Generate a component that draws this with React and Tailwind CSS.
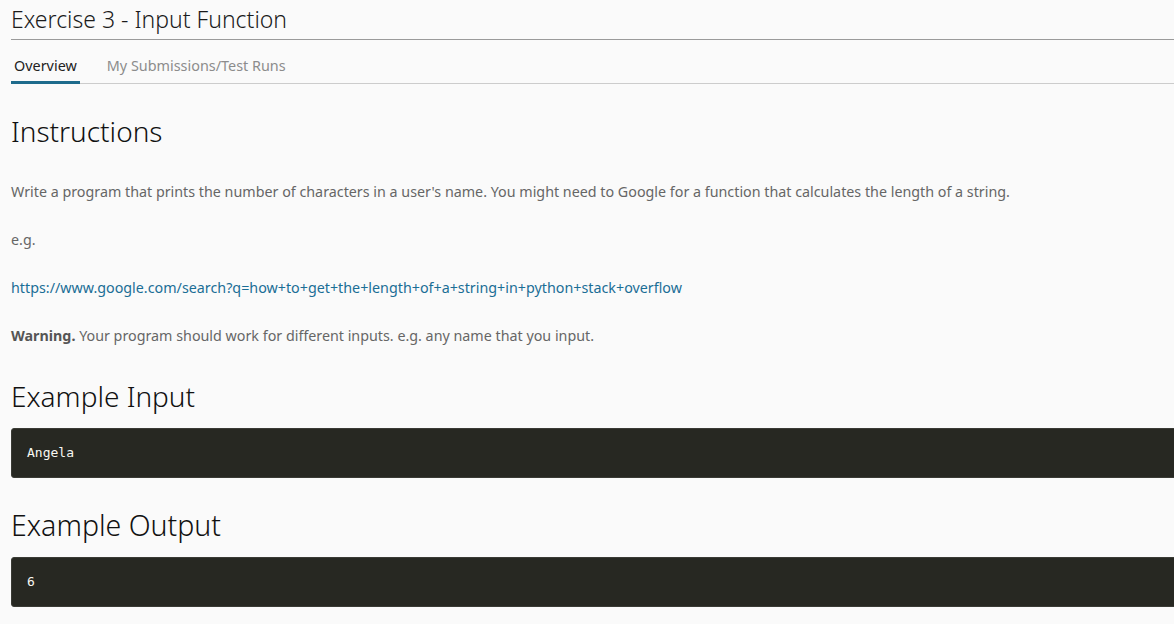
import React from "react";

const sans = "font-['Noto_Sans','Lato',sans-serif]";

function CodeBlock({ children }) {
  return (
    <div className="mr-[-8px] rounded-[3px] border border-[#3a3b35] bg-[#272822] px-[15px] py-[15px]">
      <pre className="font-['DejaVu_Sans_Mono',monospace] text-[13px] leading-[18px] text-[#f8f8f2]">{children}</pre>
    </div>
  );
}

export default function App() {
  return (
    <div className={`min-h-[624px] overflow-hidden bg-[#fafafa] pl-[11px] ${sans}`}>
      {/* Header */}
      <h1 className="border-b border-[#9a9a9a] pt-[5px] pb-[6px] text-[23px] font-light leading-[28px] text-[#1b1b1b]">
        Exercise 3 - Input Function
      </h1>

      {/* Tabs */}
      <div className="mt-[16px] flex border-b border-[#cccccc] text-[14.4px] leading-[20px]">
        <div className="-mb-px border-b-[3px] border-[#1e6b8c] px-[3px] pb-[5px] text-[#222]">Overview</div>
        <div className="ml-[27px] pb-[5px] text-[#8c8c8c]">My Submissions/Test Runs</div>
      </div>

      {/* Instructions */}
      <h2 className="mt-[29px] text-[28px] font-light leading-[36px] text-[#111]">Instructions</h2>
      <div className="mt-[34px] flex flex-col gap-[30px] text-[14.3px] leading-[18px] text-[#666]">
        <p>
          Write a program that prints the number of characters in a user's name. You might need to Google for a
          function that calculates the length of a string.
        </p>
        <p>e.g.</p>
        <p>
          <a className="text-[#1a6e96]">https://www.google.com/search?q=how+to+get+the+length+of+a+string+in+python+stack+overflow</a>
        </p>
        <p>
          <b className="font-bold text-[#555]">Warning.</b> Your program should work for different inputs. e.g. any
          name that you input.
        </p>
      </div>

      {/* Example Input */}
      <h2 className="mt-[33px] text-[28px] font-light leading-[36px] text-[#111]">Example Input</h2>
      <div className="mt-[14px]">
        <CodeBlock>Angela</CodeBlock>
      </div>

      {/* Example Output */}
      <h2 className="mt-[29px] text-[28.5px] font-light leading-[36px] text-[#111]">Example Output</h2>
      <div className="mt-[14px]">
        <CodeBlock>6</CodeBlock>
      </div>
    </div>
  );
}
